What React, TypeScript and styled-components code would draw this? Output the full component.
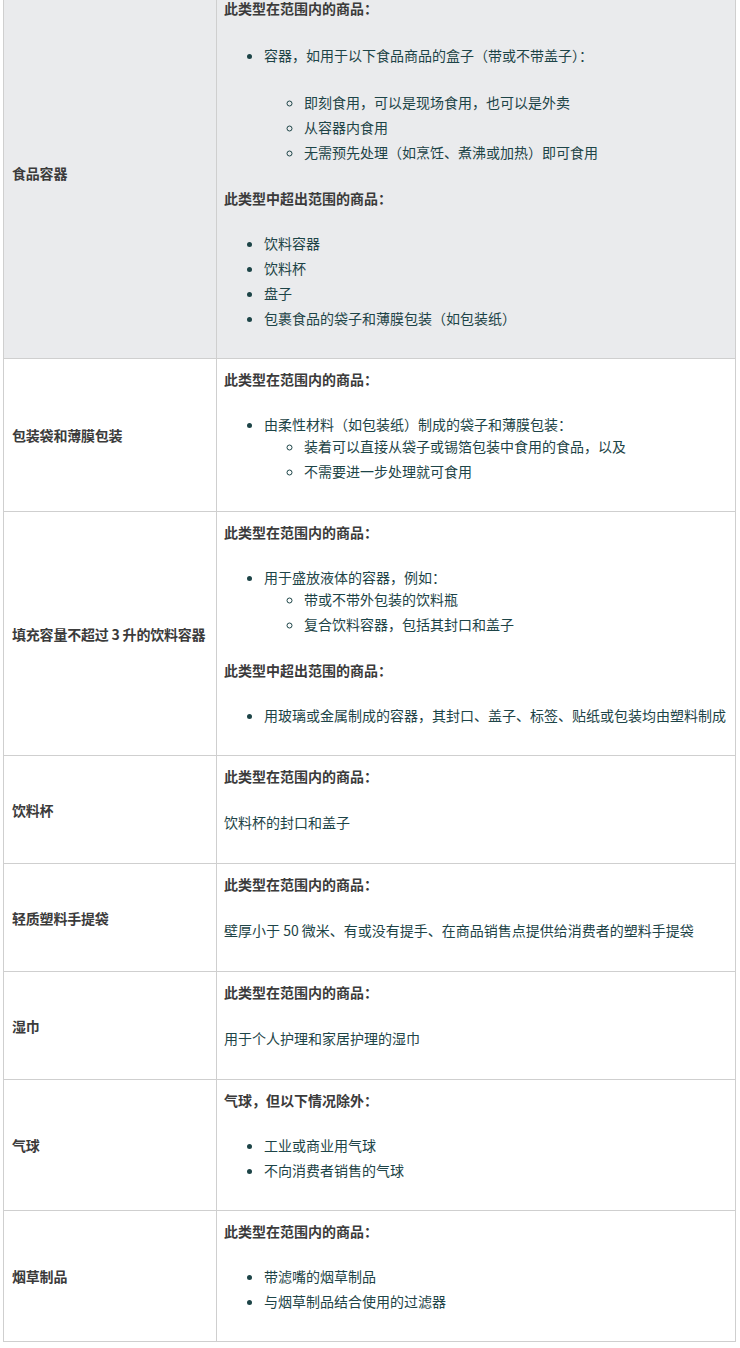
import React, { ReactElement } from 'react';
import styled, { createGlobalStyle } from 'styled-components';

const GlobalStyle = createGlobalStyle`
  body {
    margin: 0;
    background: #fff;
    font-family: "Noto Sans CJK SC", "Noto Sans", sans-serif;
    font-size: 14px;
  }
`;

const Page = styled.div`
  padding-left: 3px;
  margin-top: -13px;
`;

const Table = styled.table`
  width: 733px;
  table-layout: fixed;
  border-collapse: collapse;
  border: 1px solid #cfcfcf;
`;

const Row = styled.tr<{ $shaded?: boolean }>`
  background: ${p => (p.$shaded ? '#eaebed' : '#fff')};
`;

const LabelCell = styled.td`
  padding: 8px 2px 8px 8px;
  vertical-align: middle;
  border: 1px solid #cfcfcf;
  font-weight: bold;
  color: #3b3b3b;
  line-height: 22px;
  white-space: nowrap;
  letter-spacing: -0.2px;
`;

const ContentCell = styled.td`
  padding: 9px 2px 5px 7px;
  vertical-align: top;
  border: 1px solid #cfcfcf;
  color: #1d4447;
  line-height: 22px;
  white-space: nowrap;
`;

const Heading = styled.p`
  margin: 0;
  font-weight: bold;
  color: #3b3b3b;
`;

const Plain = styled.p`
  margin: 24px 0 25px;
`;

const List = styled.ul<{ $top?: number }>`
  margin: ${p => p.$top ?? 23}px 0 24px;
  padding-left: 40px;
  list-style: disc;
`;

const SubList = styled.ul<{ $gap?: number }>`
  margin: ${p => p.$gap ?? 0}px 0 0;
  padding-left: 40px;
  list-style: circle;
`;

const Item = styled.li`
  & + & {
    margin-top: 3px;
  }
`;

const Food = (): ReactElement => (
  <Row $shaded>
    <LabelCell>食品容器</LabelCell>
    <ContentCell>
      <Heading>此类型在范围内的商品：</Heading>
      <List $top={25}>
        <Item>
          容器，如用于以下食品商品的盒子（带或不带盖子）：
          <SubList $gap={25}>
            <Item>即刻食用，可以是现场食用，也可以是外卖</Item>
            <Item>从容器内食用</Item>
            <Item>无需预先处理（如烹饪、煮沸或加热）即可食用</Item>
          </SubList>
        </Item>
      </List>
      <Heading>此类型中超出范围的商品：</Heading>
      <List>
        <Item>饮料容器</Item>
        <Item>饮料杯</Item>
        <Item>盘子</Item>
        <Item>包裹食品的袋子和薄膜包装（如包装纸）</Item>
      </List>
    </ContentCell>
  </Row>
);

const App = (): ReactElement => (
  <Page>
    <GlobalStyle />
    <Table>
      <colgroup>
        <col style={{ width: 213 }} />
        <col />
      </colgroup>
      <tbody>
        <Food />
        <Row>
          <LabelCell>包装袋和薄膜包装</LabelCell>
          <ContentCell>
            <Heading>此类型在范围内的商品：</Heading>
            <List>
              <Item>
                由柔性材料（如包装纸）制成的袋子和薄膜包装：
                <SubList>
                  <Item>装着可以直接从袋子或锡箔包装中食用的食品，以及</Item>
                  <Item>不需要进一步处理就可食用</Item>
                </SubList>
              </Item>
            </List>
          </ContentCell>
        </Row>
        <Row>
          <LabelCell>填充容量不超过 3 升的饮料容器</LabelCell>
          <ContentCell>
            <Heading>此类型在范围内的商品：</Heading>
            <List>
              <Item>
                用于盛放液体的容器，例如：
                <SubList>
                  <Item>带或不带外包装的饮料瓶</Item>
                  <Item>复合饮料容器，包括其封口和盖子</Item>
                </SubList>
              </Item>
            </List>
            <Heading>此类型中超出范围的商品：</Heading>
            <List>
              <Item>用玻璃或金属制成的容器，其封口、盖子、标签、贴纸或包装均由塑料制成</Item>
            </List>
          </ContentCell>
        </Row>
        <Row>
          <LabelCell>饮料杯</LabelCell>
          <ContentCell>
            <Heading>此类型在范围内的商品：</Heading>
            <Plain>饮料杯的封口和盖子</Plain>
          </ContentCell>
        </Row>
        <Row>
          <LabelCell>轻质塑料手提袋</LabelCell>
          <ContentCell>
            <Heading>此类型在范围内的商品：</Heading>
            <Plain>壁厚小于 50 微米、有或没有提手、在商品销售点提供给消费者的塑料手提袋</Plain>
          </ContentCell>
        </Row>
        <Row>
          <LabelCell>湿巾</LabelCell>
          <ContentCell>
            <Heading>此类型在范围内的商品：</Heading>
            <Plain>用于个人护理和家居护理的湿巾</Plain>
          </ContentCell>
        </Row>
        <Row>
          <LabelCell>气球</LabelCell>
          <ContentCell>
            <Heading>气球，但以下情况除外：</Heading>
            <List>
              <Item>工业或商业用气球</Item>
              <Item>不向消费者销售的气球</Item>
            </List>
          </ContentCell>
        </Row>
        <Row>
          <LabelCell>烟草制品</LabelCell>
          <ContentCell>
            <Heading>此类型在范围内的商品：</Heading>
            <List>
              <Item>带滤嘴的烟草制品</Item>
              <Item>与烟草制品结合使用的过滤器</Item>
            </List>
          </ContentCell>
        </Row>
      </tbody>
    </Table>
  </Page>
);

export default App;
